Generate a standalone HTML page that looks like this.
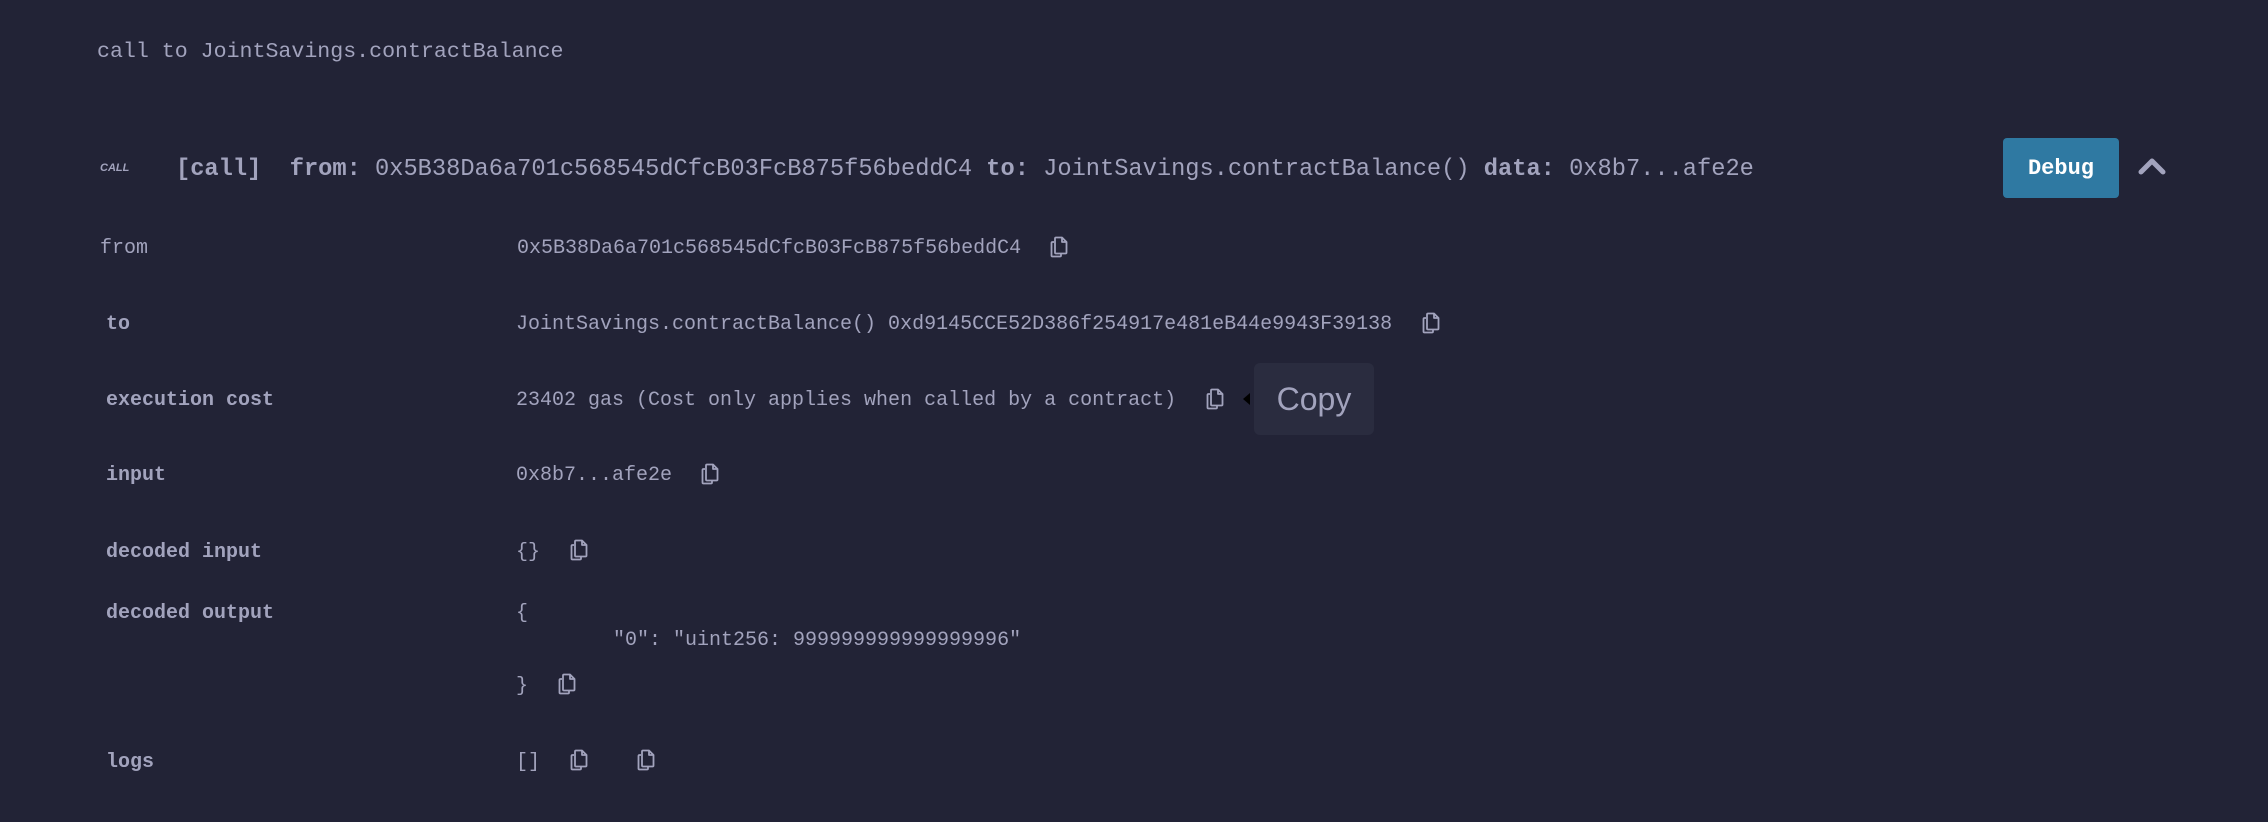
<!DOCTYPE html>
<html><head><meta charset="utf-8"><style>
html,body{margin:0;padding:0}
body{width:2268px;height:822px;background:#222336;color:#a2a3bd;font-family:"Liberation Mono",monospace;position:relative;overflow:hidden}
.a{position:absolute;white-space:pre;line-height:1}
.l{font-size:20px}
.b{font-weight:bold}
.ic{position:absolute;width:18px;height:22px}
</style></head><body>
<div class="a" style="left:97px;top:42px;font-size:21.6px">call to JointSavings.contractBalance</div>

<div class="a b" style="left:100px;top:163px;font-size:11px;font-style:italic;font-family:'Liberation Sans',sans-serif">CALL</div>
<div class="a" style="left:176px;top:158px;font-size:23.7px"><b>[call]</b>  <b>from:</b> 0x5B38Da6a701c568545dCfcB03FcB875f56beddC4 <b>to:</b> JointSavings.contractBalance() <b>data:</b> 0x8b7...afe2e</div>

<div style="position:absolute;left:2003px;top:138px;width:116px;height:60px;background:#2f79a2;border-radius:4px;color:#fff;font:bold 22px 'Liberation Mono',monospace;display:flex;align-items:center;justify-content:center">Debug</div>
<svg style="position:absolute;left:2137px;top:155px" width="30" height="22" viewBox="0 0 30 22"><path d="M4 17 L15 6 L26 17" fill="none" stroke="#a2a3bd" stroke-width="5" stroke-linecap="round" stroke-linejoin="round"/></svg>

<div class="a l" style="left:100px;top:239px">from</div>
<div class="a l" style="left:517px;top:239px">0x5B38Da6a701c568545dCfcB03FcB875f56beddC4</div>
<div class="a l b" style="left:106px;top:315px">to</div>
<div class="a l" style="left:516px;top:315px">JointSavings.contractBalance() 0xd9145CCE52D386f254917e481eB44e9943F39138</div>
<div class="a l b" style="left:106px;top:391px">execution cost</div>
<div class="a l" style="left:516px;top:391px">23402 gas (Cost only applies when called by a contract)</div>
<div class="a l b" style="left:106px;top:466px">input</div>
<div class="a l" style="left:516px;top:466px">0x8b7...afe2e</div>
<div class="a l b" style="left:106px;top:543px">decoded input</div>
<div class="a l" style="left:516px;top:543px">{}</div>
<div class="a l b" style="left:106px;top:604px">decoded output</div>
<div class="a l" style="left:516px;top:604px">{</div>
<div class="a l" style="left:613px;top:631px">"0": "uint256: 999999999999999996"</div>
<div class="a l" style="left:516px;top:677px">}</div>
<div class="a l b" style="left:106px;top:753px">logs</div>
<div class="a l" style="left:516px;top:753px">[]</div>

<div style="position:absolute;left:1254px;top:363px;width:120px;height:72px;background:#2a2c3f;border-radius:6px;color:#a2a3bd;font:32px 'Liberation Sans',sans-serif;display:flex;align-items:center;justify-content:center">Copy</div>
<div style="position:absolute;left:1243px;top:393px;width:0;height:0;border-top:6px solid transparent;border-bottom:6px solid transparent;border-right:7px solid #000"></div>

<svg width="0" height="0" style="position:absolute"><defs><symbol id="cp" viewBox="0 0 18 22"><path d="M4 6 H2.5 Q1.5 6 1.5 7 V19.5 Q1.5 20.5 2.5 20.5 H10 Q11 20.5 11 19.5 V18" fill="none" stroke="#a2a3bd" stroke-width="1.8"/><path d="M5 2.5 Q5 1.5 6 1.5 H12 L16.5 6 V16.5 Q16.5 17.5 15.5 17.5 H6 Q5 17.5 5 16.5 Z M12 1.5 V6 H16.5" fill="none" stroke="#a2a3bd" stroke-width="1.8" stroke-linejoin="round"/></symbol></defs></svg>
<svg class="ic" style="left:1050px;top:236px"><use href="#cp"/></svg>
<svg class="ic" style="left:1422px;top:312px"><use href="#cp"/></svg>
<svg class="ic" style="left:1206px;top:388px"><use href="#cp"/></svg>
<svg class="ic" style="left:701px;top:463px"><use href="#cp"/></svg>
<svg class="ic" style="left:570px;top:539px"><use href="#cp"/></svg>
<svg class="ic" style="left:558px;top:673px"><use href="#cp"/></svg>
<svg class="ic" style="left:570px;top:749px"><use href="#cp"/></svg>
<svg class="ic" style="left:637px;top:749px"><use href="#cp"/></svg>
</body></html>
